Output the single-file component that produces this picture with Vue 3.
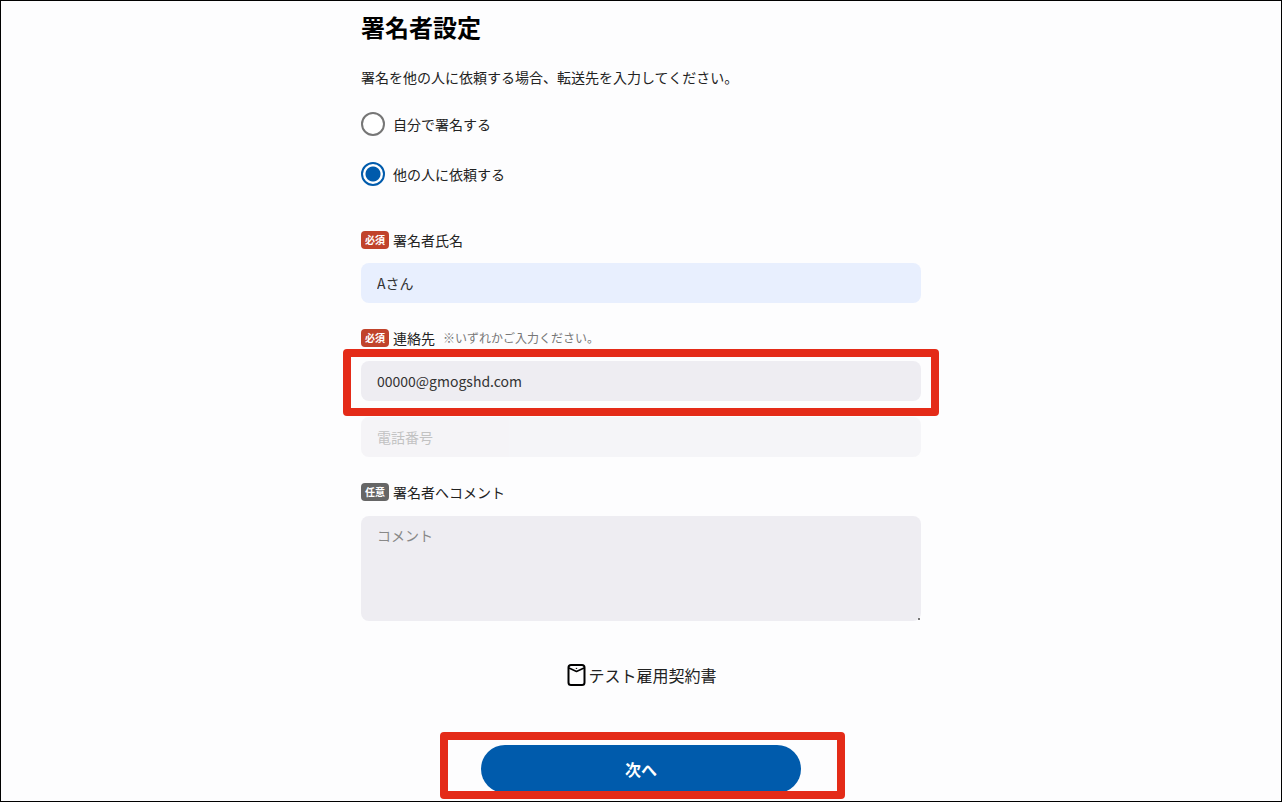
<script setup>
import { ref } from 'vue'

const signer = ref('other')
const name = ref('Aさん')
const email = ref('00000@gmogshd.com')
const phone = ref('')
const comment = ref('')
</script>

<template>
  <main class="page">
    <form class="form" @submit.prevent>
      <h1>署名者設定</h1>
      <p class="lead">署名を他の人に依頼する場合、転送先を入力してください。</p>

      <div class="choices" role="radiogroup" aria-label="署名者">
        <label class="choice">
          <input v-model="signer" type="radio" name="signer" value="self" />
          <span>自分で署名する</span>
        </label>
        <label class="choice">
          <input v-model="signer" type="radio" name="signer" value="other" />
          <span>他の人に依頼する</span>
        </label>
      </div>

      <section class="group">
        <div class="heading">
          <span class="badge">必須</span>
          <label for="name">署名者氏名</label>
        </div>
        <input id="name" v-model="name" class="field filled" type="text" />
      </section>

      <section class="group">
        <div class="heading">
          <span class="badge">必須</span>
          <label for="email">連絡先</label>
          <span class="note">※いずれかご入力ください。</span>
        </div>
        <div class="contacts">
          <div class="marked">
            <input id="email" v-model="email" class="field" type="text" />
            <span class="frame frame-field"></span>
          </div>
          <input v-model="phone" class="field" type="tel" placeholder="電話番号" aria-label="電話番号" disabled />
        </div>
      </section>

      <section class="group">
        <div class="heading">
          <span class="badge optional">任意</span>
          <label for="comment">署名者へコメント</label>
        </div>
        <textarea id="comment" v-model="comment" class="field area" placeholder="コメント"></textarea>
      </section>

      <div class="document">
        <svg width="20" height="24" viewBox="0 0 20 24" fill="none" stroke="#000" stroke-width="2" stroke-linejoin="round" aria-hidden="true">
          <rect x="1.5" y="2" width="16" height="20" rx="2.5" />
          <path d="M2 5 L9.5 8.4 L17 5" stroke-width="1.6" />
          <path d="M8.8 5.4h1.4" stroke-width="1" />
        </svg>
        <span>テスト雇用契約書</span>
      </div>

      <div class="marked action">
        <button type="submit">次へ</button>
        <span class="frame frame-button"></span>
      </div>
    </form>
  </main>
</template>

<style>
body {
  margin: 0;
}
</style>

<style scoped>
.page {
  box-sizing: border-box;
  min-height: 100vh;
  padding: 8px 24px 7px;
  border: 1px solid #000;
  background: #fdfdfe;
  color: #222;
  font-family: "Noto Sans CJK JP", "Noto Sans", sans-serif;
  font-size: 14px;
  line-height: 20px;
}

.form {
  max-width: 560px;
  margin: 0 auto;
}

h1 {
  margin: 0;
  color: #000;
  font-size: 24px;
  line-height: 36px;
}

.lead {
  margin: 22px 0 25px;
}

.choices {
  display: flex;
  flex-direction: column;
  gap: 26px;
}

.choice {
  display: flex;
  align-items: center;
  gap: 8px;
  line-height: 24px;
}

.choice input {
  appearance: none;
  box-sizing: border-box;
  width: 24px;
  height: 24px;
  margin: 0;
  border: 2px solid #767676;
  border-radius: 50%;
  background: #fff;
}

.choice input:checked {
  border-color: #005bac;
  background: radial-gradient(circle, #005bac 7px, #fff 8px);
}

.group {
  margin-top: 25px;
}

.choices + .group {
  margin-top: 44px;
}

.heading {
  display: flex;
  align-items: center;
  gap: 4px;
  margin-bottom: 13px;
}

.badge {
  width: 28px;
  border-radius: 4px;
  background: #c1432b;
  color: #fff;
  font-size: 10px;
  font-weight: 700;
  line-height: 18px;
  text-align: center;
}

.badge.optional {
  background: #666;
}

.note {
  margin-left: 4px;
  color: #777;
  font-size: 12px;
}

.field {
  display: block;
  box-sizing: border-box;
  width: 100%;
  height: 40px;
  margin: 0;
  padding: 0 16px;
  border: 0;
  border-radius: 8px;
  background: #eeedf2;
  color: #333;
  font: inherit;
}

.field::placeholder {
  color: #888;
  opacity: 1;
}

.field:disabled {
  opacity: 0.5;
}

.field.filled {
  background: #e8effe;
}

.field.area {
  height: 105px;
  margin-top: 14px;
  padding: 9px 16px;
}

.field.area::-webkit-resizer {
  background: radial-gradient(circle at 13px 13px, #777 1px, transparent 1px);
}

.contacts {
  display: grid;
  gap: 16px;
}

.marked {
  position: relative;
}

.frame {
  position: absolute;
  z-index: 1;
  border: 8px solid #e42b18;
  border-radius: 4px;
  pointer-events: none;
}

.frame-field {
  inset: -12px -18px -15px;
}

.frame-button {
  inset: -13px -44px -6px -41px;
}

.document {
  display: flex;
  align-items: center;
  justify-content: center;
  gap: 1px;
  margin-top: 42px;
  padding-left: 2px;
  font-size: 16px;
  line-height: 24px;
}

.action {
  max-width: 320px;
  margin: 58px auto 0;
}

button {
  display: block;
  width: 100%;
  height: 48px;
  padding: 0;
  border: 0;
  border-radius: 24px;
  background: #005bac;
  color: #fff;
  font: inherit;
  font-size: 16px;
  font-weight: 700;
}
</style>
